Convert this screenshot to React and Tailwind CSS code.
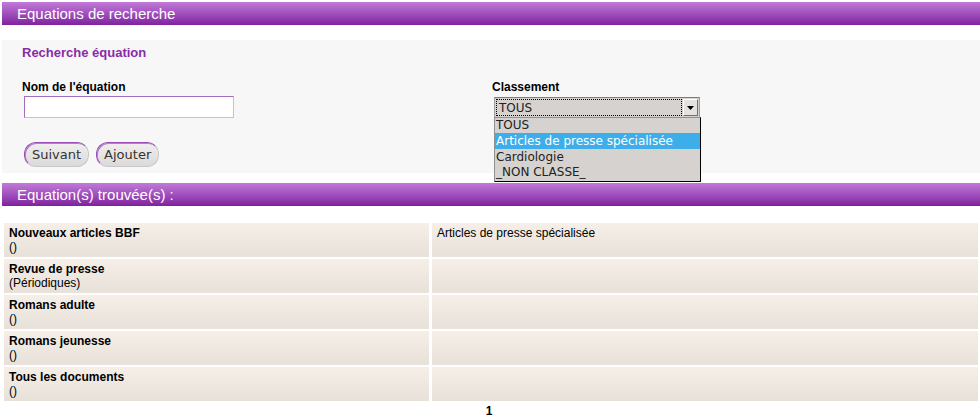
import React from "react";

const rows = [
  { t: "Nouveaux articles BBF", s: "()", c: "Articles de presse spécialisée" },
  { t: "Revue de presse", s: "(Périodiques)", c: "" },
  { t: "Romans adulte", s: "()", c: "" },
  { t: "Romans jeunesse", s: "()", c: "" },
  { t: "Tous les documents", s: "()", c: "" },
];

function Bar({ children }) {
  return (
    <div className="ml-[2px] h-[23px] bg-gradient-to-b from-[#c27ad9] to-[#7f1f9f] text-white text-[15px] leading-[23px] pl-[15px] font-['Liberation_Sans',sans-serif]">
      {children}
    </div>
  );
}

function Btn({ children }) {
  return (
    <button className="h-[25px] px-[7px] rounded-[12px] border border-[#c8c8c8] border-l-[#9a4cb8] border-t-[#9a4cb8] bg-gradient-to-b from-[#f0efee] to-[#dcdad8] text-[13px] text-[#333] font-['DejaVu_Sans',sans-serif] shadow-[inset_1px_1px_0_#b57fcc]">
      {children}
    </button>
  );
}

export default function App() {
  return (
    <div className="w-[980px] h-[419px] bg-white font-['Liberation_Sans',sans-serif] text-[12px] text-black pt-[2px] relative overflow-hidden">
      <Bar>Equations de recherche</Bar>
      <div className="ml-[2px] mt-[15px] h-[133px] bg-[#f7f7f7] relative">
        <div className="pl-[20px] pt-[5px] text-[13px] font-bold text-[#8a2aa8] leading-[16px]">Recherche équation</div>
        <div className="flex mt-[19px]">
          <div className="w-[490px] pl-[20px]">
            <div className="font-bold leading-[14px]">Nom de l'équation</div>
            <div className="mt-[2px] ml-[2px] w-[210px] h-[22px] bg-white border border-[#c4c4c4] border-t-[#a46cbc] border-l-[#a46cbc]"></div>
            <div className="flex gap-[7px] mt-[24px] ml-[2px]">
              <Btn>Suivant</Btn>
              <Btn>Ajouter</Btn>
            </div>
          </div>
          <div>
            <div className="font-bold leading-[14px]">Classement</div>
            <div className="relative mt-[3px] ml-[2px] w-[206px]">
              <div className="h-[21px] bg-[#d6d2cf] border border-[#a0a0a0] border-t-[#9966aa] flex items-center p-[1px]">
                <div className="flex-1 h-full border border-dotted border-black flex items-center pl-[2px] text-[12px] font-['DejaVu_Sans',sans-serif] text-[#222]">TOUS</div>
                <div className="w-[15px] h-full ml-[1px] bg-[#e4e2e0] border-r border-b border-[#707070] border-l border-t border-l-white border-t-white flex items-center justify-center">
                  <svg width="7" height="4" viewBox="0 0 7 4"><path d="M0 0h7L3.5 4z" fill="#000" /></svg>
                </div>
              </div>
              <div className="absolute left-0 top-[20px] w-[207px] bg-[#d6d2cf] border border-[#909090] border-r-black border-b-black text-[12px] font-['DejaVu_Sans',sans-serif] text-[#222] z-10">
                <div className="h-[15px] leading-[15px] pl-[1px]">TOUS</div>
                <div className="h-[16px] leading-[16px] pl-[1px] bg-[#3daee9] text-white">Articles de presse spécialisée</div>
                <div className="h-[16px] leading-[16px] pl-[1px]">Cardiologie</div>
                <div className="h-[16px] leading-[15px] pl-[1px]">_NON CLASSE_</div>
              </div>
            </div>
          </div>
        </div>
      </div>
      <div className="mt-[10px]">
        <Bar>Equation(s) trouvée(s) :</Bar>
      </div>
      <div className="mt-[17px] ml-[4px] w-[974px] flex flex-col gap-[2px]">
        {rows.map((r) => (
          <div key={r.t} className="flex gap-[3px] h-[34px]">
            <div className="w-[425px] bg-gradient-to-b from-[#f5efe7] to-[#e8e1da] pl-[5px] pt-[3px] leading-[14px]">
              <div className="font-bold">{r.t}</div>
              <div>{r.s}</div>
            </div>
            <div className="flex-1 bg-gradient-to-b from-[#f5efe7] to-[#e8e1da] pl-[5px] pt-[3px] leading-[14px]">{r.c}</div>
          </div>
        ))}
      </div>
      <div className="text-center font-bold mt-[3px] pr-[2px] leading-[14px]">1</div>
    </div>
  );
}
